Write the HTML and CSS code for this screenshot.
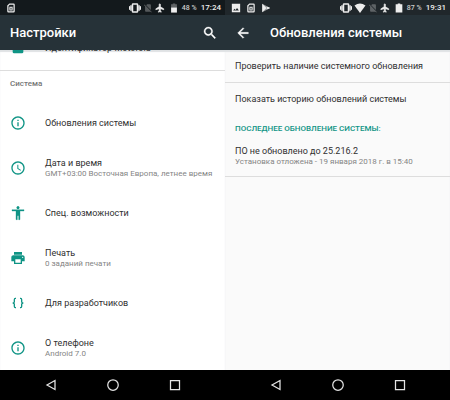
FILE: index.html
```html
<!DOCTYPE html>
<html lang="ru">
<head>
  <meta charset="UTF-8" />
  <meta name="viewport" content="width=device-width, initial-scale=1.0" />
  <title>Настройки</title>
  <link rel="stylesheet" href="styles.css">
</head>
<body>
  <!-- shared icons -->
  <svg class="defs" aria-hidden="true">
    <symbol id="vibrate" viewBox="0 0 24 24"><path d="M0 15h2V9H0v6zm3 2h2V7H3v10zm19-8v6h2V9h-2zm-3 8h2V7h-2v10zM16.500 3h-9C6.670 3 6 3.670 6 4.500v15c0 .83.67 1.500 1.500 1.500h9c.83 0 1.500-.67 1.500-1.500v-15c0-.83-.67-1.500-1.500-1.500zM16 19H8V5h8v14z" stroke="currentColor"/></symbol>
    <symbol id="nosim" viewBox="0 0 24 24"><path d="M19 5c0-1.100-.9-2-2-2h-7L7.660 5.340 19 16.680V5zM3.650 3.880 2.380 5.150 5 7.770V19c0 1.100.9 2 2 2h10c.35 0 .68-.1.970-.26l1.880 1.880 1.270-1.270z"/></symbol>
    <symbol id="plane" viewBox="0 0 24 24"><path d="M21 16v-2l-8-5V3.500c0-.83-.67-1.500-1.500-1.500S10 2.670 10 3.500V9l-8 5v2l8-2.500V19l-2 1.500V22l3.500-1 3.500 1v-1.500L13 19v-5.500l8 2.500z" stroke="currentColor" stroke-width="1.500"/></symbol>
    <symbol id="card" viewBox="0 0 24 24"><path d="M8 1h10a3 3 0 0 1 3 3v16a3 3 0 0 1-3 3H6a3 3 0 0 1-3-3V6zm1 3L6 7v13h12V4z" fill-rule="evenodd"/><path d="M8 9h8v9H8z"/><path d="M10 11l4 5m0-5l-4 5" stroke="#172025" stroke-width="1.500"/></symbol>
    <symbol id="info" viewBox="0 0 24 24"><path d="M11 17h2v-6h-2v6zm1-15C6.480 2 2 6.480 2 12s4.480 10 10 10 10-4.480 10-10S17.520 2 12 2zm0 18c-4.410 0-8-3.590-8-8s3.590-8 8-8 8 3.590 8 8-3.590 8-8 8zM11 9h2V7h-2v2z"/></symbol>
    <symbol id="back" viewBox="0 0 24 24"><path d="M20 3v18L4 12z" fill="none" stroke="currentColor" stroke-width="2.500"/></symbol>
    <symbol id="home" viewBox="0 0 24 24"><circle cx="12" cy="12" r="10.500" fill="none" stroke="currentColor" stroke-width="2.500"/></symbol>
    <symbol id="recent" viewBox="0 0 24 24"><path d="M3 3h18v18H3z" fill="none" stroke="currentColor" stroke-width="2.500"/></symbol>
  </svg>

  <div class="screens">
    <section class="phone">
      <div class="status">
        <svg class="icon-s"><use href="#card"/></svg>
        <div class="status-right">
          <svg class="icon-m"><use href="#vibrate"/></svg>
          <svg class="icon-s dim"><use href="#nosim"/></svg>
          <svg class="icon-s"><use href="#plane"/></svg>
          <svg class="icon-s battery" viewBox="0 0 24 24"><path d="M9 1h6v2h4v9H5V3h4z" opacity=".35"/><path d="M5 11h14v12H5z"/></svg>
          <span class="percent">48 %</span>
          <span class="time">17:24</span>
        </div>
      </div>
      <header class="bar">
        <h1>Настройки</h1>
        <button class="bar-btn search" aria-label="Поиск">
          <svg class="icon-l" viewBox="0 0 24 24"><path d="M15.500 14h-.79l-.28-.27C15.410 12.590 16 11.110 16 9.500 16 5.910 13.090 3 9.500 3S3 5.910 3 9.500 5.910 16 9.500 16c1.610 0 3.090-.59 4.230-1.570l.27.28v.79l5 4.990L20.490 19l-4.990-5zm-6 0C7.010 14 5 11.990 5 9.500S7.010 5 9.500 5 14 7.010 14 9.500 11.990 14 9.500 14z" stroke="currentColor" stroke-width=".5"/></svg>
        </button>
      </header>
      <main class="content list">
        <a class="row" href="#id">
          <svg class="icon-l" viewBox="0 0 24 24"><path d="M4 3h16v15a2 2 0 0 1-2 2H6a2 2 0 0 1-2-2z"/></svg>
          <span class="label">Идентификатор Motorola</span>
        </a>
        <h2 class="category">Система</h2>
        <a class="row" href="#updates">
          <svg class="icon-l"><use href="#info"/></svg>
          <span class="label">Обновления системы</span>
        </a>
        <a class="row" href="#date">
          <svg class="icon-l" viewBox="0 0 24 24"><path d="M12 2C6.500 2 2 6.500 2 12s4.500 10 10 10 10-4.480 10-10S17.520 2 12 2zm0 18c-4.420 0-8-3.580-8-8s3.580-8 8-8 8 3.580 8 8-3.580 8-8 8zM12.500 7H11v6l4.700 3.200.8-1.300-4-2.400z"/></svg>
          <span class="label">Дата и время<small>GMT+03:00 Восточная Европа, летнее время</small></span>
        </a>
        <a class="row" href="#accessibility">
          <svg class="icon-l" viewBox="0 0 24 24"><path d="M12 2c1.100 0 2 .9 2 2s-.9 2-2 2-2-.9-2-2 .9-2 2-2zm9 7h-6v13h-2v-6h-2v6H9V9H3V7h18v2z" stroke="currentColor" stroke-width=".5"/></svg>
          <span class="label">Спец. возможности</span>
        </a>
        <a class="row" href="#print">
          <svg class="icon-l" viewBox="0 0 24 24"><path d="M19 8H5c-1.660 0-3 1.340-3 3v6h4v4h12v-4h4v-6c0-1.660-1.340-3-3-3zm-3 11H8v-5h8v5zm3-7c-.55 0-1-.45-1-1s.45-1 1-1 1 .45 1 1-.45 1-1 1zm-1-9H6v4h12V3z"/></svg>
          <span class="label">Печать<small>0 заданий печати</small></span>
        </a>
        <a class="row" href="#dev">
          <svg class="icon-l" viewBox="0 0 24 24"><path d="M9 5H8Q6.500 5 6.500 7v3Q6.500 12 4 12q2.500 0 2.500 2v3q0 2 1.500 2h1M15 5h1q1.500 0 1.500 2v3q0 2 2.500 2-2.500 0-2.500 2v3q0 2-1.500 2h-1" fill="none" stroke="currentColor" stroke-width="2"/></svg>
          <span class="label">Для разработчиков</span>
        </a>
        <a class="row" href="#about">
          <svg class="icon-l"><use href="#info"/></svg>
          <span class="label">О телефоне<small>Android 7.0</small></span>
        </a>
      </main>
      <nav class="nav">
        <button aria-label="Назад"><svg class="icon-m"><use href="#back"/></svg></button>
        <button aria-label="Домой"><svg class="icon-m"><use href="#home"/></svg></button>
        <button aria-label="Недавние"><svg class="icon-m"><use href="#recent"/></svg></button>
      </nav>
    </section>

    <section class="phone updates">
      <div class="status">
        <svg class="icon-s" viewBox="0 0 24 24"><path d="M2 2h20v20H2zm3 16h14l-4.500-6-3.500 4.500-2.500-3z" fill-rule="evenodd"/></svg>
        <svg class="icon-s"><use href="#card"/></svg>
        <svg class="icon-s" viewBox="0 0 24 24"><path d="M3 2l19 10L3 22z" opacity=".6"/><path d="M3 2l10 10L3 22zM16 9l6 3-6 3-3-3z"/></svg>
        <div class="status-right">
          <svg class="icon-m"><use href="#vibrate"/></svg>
          <svg class="icon-m" viewBox="0 0 24 24"><path d="M12 22L1 7Q12-1 23 7z"/></svg>
          <svg class="icon-s dim"><use href="#nosim"/></svg>
          <svg class="icon-s"><use href="#plane"/></svg>
          <svg class="icon-s battery" viewBox="0 0 24 24"><path d="M9 1h6v2h5v20H4V3h5z"/></svg>
          <span class="percent">87 %</span>
          <span class="time">19:31</span>
        </div>
      </div>
      <header class="bar">
        <button class="bar-btn" aria-label="Назад">
          <svg class="icon-l" viewBox="0 0 24 24"><path d="M20 11H7.830l5.590-5.590L12 4l-8 8 8 8 1.410-1.410L7.830 13H20v-2z" stroke="currentColor" stroke-width=".5"/></svg>
        </button>
        <h1>Обновления системы</h1>
      </header>
      <main class="content">
        <a class="option line" href="#check">Проверить наличие системного обновления</a>
        <a class="option" href="#history">Показать историю обновлений системы</a>
        <h2 class="section">Последнее обновление системы:</h2>
        <p class="last line">ПО не обновлено до 25.216.2<small>Установка отложена - 19 января 2018 г. в 15:40</small></p>
      </main>
      <nav class="nav">
        <button aria-label="Назад"><svg class="icon-m"><use href="#back"/></svg></button>
        <button aria-label="Домой"><svg class="icon-m"><use href="#home"/></svg></button>
        <button aria-label="Недавние"><svg class="icon-m"><use href="#recent"/></svg></button>
      </nav>
    </section>
  </div>
</body>
</html>
```
FILE: styles.css
```css
* { box-sizing: border-box; margin: 0; padding: 0; }
body { font-family: Roboto, "Noto Sans", sans-serif; font-size: 9px; line-height: 12px; color: #303030; }
a { color: inherit; text-decoration: none; }
button { background: none; border: none; color: inherit; display: flex; cursor: pointer; }
small { display: block; font-size: 8px; line-height: 10px; color: #858585; }
svg { fill: currentColor; flex: none; }
.defs { display: none; }
.icon-s { width: 10px; height: 10px; }
.icon-m { width: 12px; height: 12px; }
.icon-l { width: 16px; height: 16px; }

.screens { display: grid; grid-template-columns: 1fr 1fr; height: 100vh; }
.phone { display: flex; flex-direction: column; min-width: 0; min-height: 0; background: #fff; }
.updates { background: #fafafa; }

.status { display: flex; align-items: center; gap: 5px; height: 15px; padding: 0 4px 0 6px; background: #13191c; color: #eee; }
.updates .status { background: #20272b; }
.status-right { display: flex; align-items: center; gap: 2px; margin-left: auto; }
.dim { opacity: 0.3; }
.battery { margin-left: 2px; }
.percent { font-size: 7px; font-weight: 500; margin: 0 2px 0 1px; color: #ccc; }
.time { font-size: 8px; font-weight: 500; }

.bar { display: flex; align-items: center; height: 35px; padding: 0 10px; background: #263238; color: #fff; }
.bar h1 { font-size: 13px; line-height: 18px; font-weight: 500; white-space: nowrap; }
.search { margin-left: auto; margin-right: -3px; }
.updates .bar { gap: 19px; }

.content { flex: 1; min-height: 0; overflow: hidden; box-shadow: inset 0 2px 1px #dfe2e4; }
.list { display: flex; flex-direction: column; justify-content: flex-end; }
.row { display: flex; align-items: center; gap: 19px; height: 45px; padding: 0 10px; flex: none; }
.row svg { color: #0f9485; }
.label { white-space: nowrap; }
.category { flex: none; height: 30px; padding: 7px 10px; border-top: 1px solid #ddd; font-size: 8px; font-weight: 500; color: #757575; }

.option { display: block; padding: 10px; white-space: nowrap; }
.line { border-bottom: 1px solid #ddd; }
.section { padding: 8px 10px; font-size: 8px; font-weight: 500; text-transform: uppercase; color: #0f9485; }
.last { padding: 2px 10px 9px; white-space: nowrap; }

.nav { display: flex; align-items: center; justify-content: center; gap: 50px; height: 30px; background: #000; color: #e4e4e4; }
```
